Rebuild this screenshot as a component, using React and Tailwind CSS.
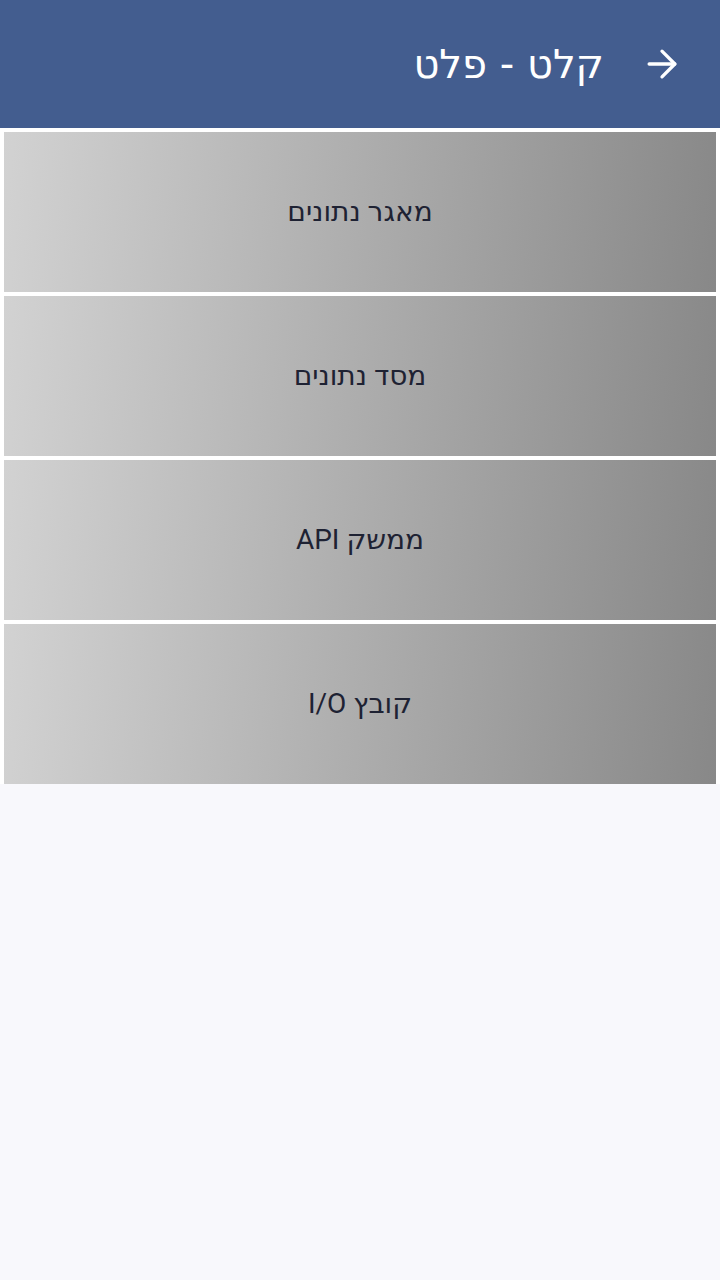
import { FiArrowRight } from 'react-icons/fi';

const items = ['מאגר נתונים', 'מסד נתונים', 'ממשק API', 'קובץ I/O'];

const App = () => {
  return (
    <div dir="rtl" className="min-h-screen bg-[#f8f8fc]" style={{ fontFamily: 'Roboto, "DejaVu Sans", sans-serif' }}>
      {/* Header */}
      <div className="h-32 bg-[#435d8f] flex items-center pr-9 gap-9 text-white">
        <FiArrowRight className="w-11 h-11" strokeWidth={1.8} />
        <h1 className="text-[40px] leading-none" style={{ fontFamily: '"DejaVu Sans", sans-serif' }}>קלט - פלט</h1>
      </div>

      {/* Options */}
      <div className="flex flex-col gap-1 p-1 pb-0 bg-white">
        {items.map((item) => (
          <button
            key={item}
            className="h-40 flex items-center justify-center text-[28px] text-[#1e2233] bg-[linear-gradient(95deg,#d2d2d2,#888888)]"
          >
            {item}
          </button>
        ))}
      </div>
    </div>
  );
};

export default App;
